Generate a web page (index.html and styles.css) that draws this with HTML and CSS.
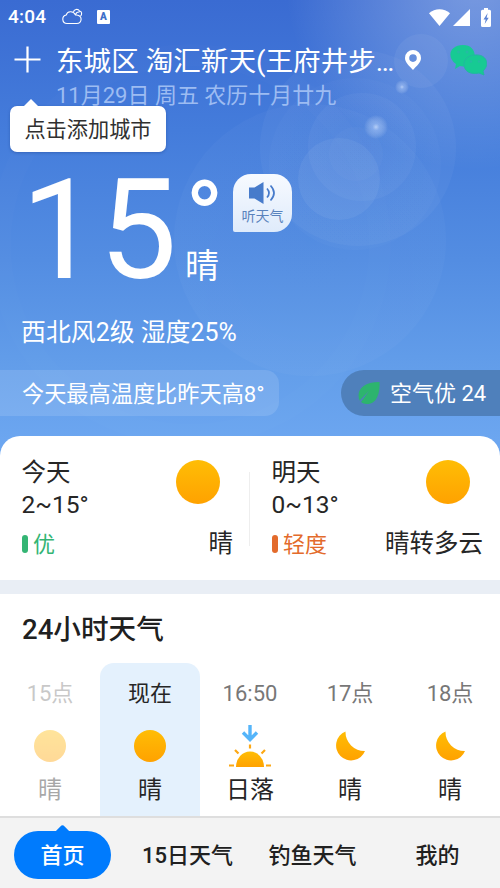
FILE: index.html
```html
<!DOCTYPE html>
<html lang="zh-CN">
<head>
<meta charset="utf-8">
<meta name="viewport" content="width=device-width, initial-scale=1">
<title>天气</title>
<link rel="stylesheet" href="styles.css">
</head>
<body>
<div class="app">
  <svg class="defs" width="0" height="0" aria-hidden="true">
    <defs>
      <linearGradient id="sunfill" x1="0" y1="0" x2="0" y2="1"><stop offset="0" stop-color="#ffbd05"/><stop offset="1" stop-color="#ffa200"/></linearGradient>
      <symbol id="sun" viewBox="0 0 44 44"><circle cx="22" cy="22" r="22" fill="url(#sunfill)"/></symbol>
      <symbol id="moon" viewBox="0 0 30 30"><path d="M10.500 .5A15 15 0 1 0 30 20A19 19 0 0 1 10.500 .5Z" fill="url(#sunfill)"/></symbol>
    </defs>
  </svg>
  <header class="sky">
    <svg class="flare" viewBox="0 0 500 460" aria-hidden="true">
      <defs>
        <radialGradient id="glow"><stop offset="0" stop-color="#fff" stop-opacity=".33"/><stop offset="1" stop-color="#fff" stop-opacity="0"/></radialGradient>
        <radialGradient id="spark"><stop offset="0" stop-color="#d5e5ff" stop-opacity=".75"/><stop offset=".3" stop-color="#c5dbff" stop-opacity=".4"/><stop offset="1" stop-color="#fff" stop-opacity="0"/></radialGradient>
        <radialGradient id="disc"><stop offset="0" stop-color="#fff" stop-opacity=".02"/><stop offset="1" stop-color="#fff" stop-opacity=".035"/></radialGradient>
      </defs>
      <circle cx="475" cy="-20" r="190" fill="url(#glow)"/>
      <circle cx="310" cy="240" r="136" fill="url(#disc)" opacity=".7"/>
      <circle cx="358" cy="148" r="98" fill="url(#disc)"/>
      <circle cx="355" cy="164" r="86" fill="url(#disc)" opacity=".5"/>
      <circle cx="362" cy="147" r="54" fill="url(#disc)"/>
      <circle cx="339" cy="179" r="41" fill="#fff" opacity=".055"/>
      <circle cx="356" cy="154" r="27" fill="#fff" opacity=".025"/>
      <circle cx="421" cy="61" r="27" fill="#fff" opacity=".05"/>
      <circle cx="190" cy="245" r="190" fill="none" stroke="#fff" stroke-width="22" opacity=".012"/>
      <circle cx="376" cy="127" r="12" fill="url(#spark)"/>
      <circle cx="402" cy="87" r="7" fill="url(#spark)"/>
    </svg>
    <div class="status">
      <span class="clock">4:04</span>
      <svg class="st-cloud" viewBox="0 0 22 18" fill="none" stroke="#fff" stroke-width="1.100"><path d="M5 15.500a4.300 4.300 0 0 1-.8-8.500C5.200 3.500 11 2 13.500 7c3-.2 5.800 1.300 5.600 4.300-.1 2.500-1.800 4.200-4.400 4.200Z"/><path d="M11.500 4c.3-2.800 4.500-3.600 6-1 2.700.4 2.600 3.600 1 5.200M13.500 6.800c.5-2 2.200-3 4-2.800"/></svg>
      <span class="st-a">A</span>
      <span class="grow"></span>
      <svg class="st-wifi" viewBox="0 0 21 17"><path d="M10.500 17 0 4.200C6-1.200 15-1.200 21 4.200Z" fill="#fff"/></svg>
      <svg class="st-signal" viewBox="0 0 18 17"><path d="M17 0v17H0Z" fill="#fff"/></svg>
      <svg class="st-battery" viewBox="0 0 10 19"><path d="M3 0h4v1.800h1.500Q10 1.800 10 3.300v14.200q0 1.500-1.500 1.500h-7Q0 19 0 17.500V3.300Q0 1.800 1.500 1.800H3Z" fill="#fff"/><path d="M6.700 5 2.500 11.400h2.200L3.700 16 7.700 9.700H5.600Z" fill="#5b82d4"/></svg>
    </div>
    <div class="place">
      <svg class="plus" viewBox="0 0 28 28"><path d="M14 .5v27M.5 14h27" stroke="#fff" stroke-width="2.300"/></svg>
      <div class="names">
        <div class="city"><span class="cityname">东城区 淘汇新天(王府井步…</span>
          <svg class="pin" viewBox="0 0 16 20"><path fill="#fff" fill-rule="evenodd" d="M8 0a8 8 0 0 1 8 8c0 4.700-4.500 8-8 12C4.500 16 0 12.700 0 8a8 8 0 0 1 8-8Zm0 4.300a3.800 3.800 0 1 0 0 7.600 3.800 3.800 0 0 0 0-7.600Z"/></svg>
        </div>
        <div class="date">11月29日 周五 农历十月廿九</div>
      </div>
      <svg class="wechat" viewBox="0 0 37 32"><g fill="#17ca93"><path d="M13 1C25 1 28 13 21 20c-2 2-7 3-11 2l-5 3 1-5C-4 13 0 1 13 1Z"/><path stroke="#22b8a0" stroke-width="1" d="M25 11c12-1 15 10 8 16l1 4-5-2C20 31 14 27 14 20c0-5 5-9 11-9Z"/></g><g fill="#25bba3"><circle cx="8.500" cy="8" r="1.500"/><circle cx="17" cy="8" r="1.500"/><circle cx="21" cy="17.500" r="1.200"/><circle cx="29" cy="17.500" r="1.200"/></g></svg>
      <div class="tip">点击添加城市</div>
    </div>
    <div class="now">
      <span class="temp">15</span>
      <div class="side"><span class="deg">°</span><span class="cond">晴</span></div>
      <div class="listen">
        <svg viewBox="0 0 28 22"><path d="M0 5.500h5.500L14.500 0v22L5.500 16.500H0Z" fill="#477bcb"/><path d="M18 6.500q4 4.500 0 9M21.500 3.500q7 7.500 0 15" fill="none" stroke="#477bcb" stroke-width="1.700"/></svg>
        <span>听天气</span>
      </div>
    </div>
    <div class="wind">西北风2级 湿度25%</div>
    <div class="chips">
      <span class="compare">今天最高温度比昨天高8°</span>
      <span class="air"><svg viewBox="0 0 22 22"><path d="M21.500 0C22 9 20 22 9 22c-3 0-4.500-1-6-2l8-11-9.500 9.500C-2 9 4 0 21.500 0Z" fill="#2db46e"/></svg><span>空气优 24</span></span>
    </div>
  </header>
  <section class="days">
    <div class="day">
      <div class="left"><span>今天</span><span>2~15°</span><span class="aqi good"><i></i>优</span></div>
      <div class="right"><svg><use href="#sun"/></svg><span>晴</span></div>
    </div>
    <div class="line"></div>
    <div class="day">
      <div class="left"><span>明天</span><span>0~13°</span><span class="aqi light"><i></i>轻度</span></div>
      <div class="right"><svg><use href="#sun"/></svg><span>晴转多云</span></div>
    </div>
  </section>
  <section class="hourly">
    <h2>24小时天气</h2>
    <div class="hours">
      <div class="hour past"><time>15点</time><svg class="hsun"><use href="#sun"/></svg><span>晴</span></div>
      <div class="hour active"><time>现在</time><svg class="hsun"><use href="#sun"/></svg><span>晴</span></div>
      <div class="hour"><time>16:50</time>
        <svg class="sunset" viewBox="0 0 42 44"><path d="M21 1v13M14 8.500l7 7 7-7" fill="none" stroke="#55b5fa" stroke-width="3.400"/><path d="M7 43a14 15.500 0 0 1 28 0Z" fill="url(#sunfill)"/><path d="M0 41.500h5M37 41.500h5M6 26l3.500 3.500M36 26l-3.500 3.500M21 20.500v4" stroke="#fca815" stroke-width="2.200"/></svg>
        <span>日落</span></div>
      <div class="hour"><time>17点</time><svg class="hmoon"><use href="#moon"/></svg><span>晴</span></div>
      <div class="hour"><time>18点</time><svg class="hmoon"><use href="#moon"/></svg><span>晴</span></div>
    </div>
  </section>
  <nav class="tabs">
    <a class="tab on">首页</a><a class="tab">15日天气</a><a class="tab">钓鱼天气</a><a class="tab">我的</a>
  </nav>
</div>
</body>
</html>
```
FILE: styles.css
```css
* { box-sizing: border-box; }
body { margin: 0; font-family: Roboto, "Noto Sans CJK SC", sans-serif; color: #262626; }
svg { display: block; flex: none; }
.defs { position: absolute; }
.app { width: 500px; height: 888px; overflow: hidden; display: flex; flex-direction: column; background: #fff; }
.grow { flex: 1; }

.sky { position: relative; flex: none; height: 460px; color: #fff; display: flex; flex-direction: column; background: linear-gradient(180deg, #3a6bd2 0, #447cdb 130px, #538de2 260px, #639eea 370px, #6ca6f0 440px); }
.flare { position: absolute; left: 0; top: 0; width: 500px; height: 460px; }
.status { position: relative; height: 34px; display: flex; align-items: center; padding: 0 9px 0 8px; }
.clock { font-size: 19px; font-weight: 500; line-height: 34px; width: 54px; letter-spacing: .2px; }
.st-cloud { width: 22px; height: 18px; }
.st-a { margin-left: 13px; width: 13px; height: 14px; background: #fff; border-radius: 1px; color: #3e70c9; font-size: 10px; font-weight: 900; line-height: 13px; text-align: center; }
.st-wifi { width: 21px; height: 17px; margin-right: 3px; }
.st-signal { width: 18px; height: 17px; margin-right: 10px; }
.st-battery { width: 10px; height: 19px; }

.place { position: relative; height: 126px; display: flex; align-items: flex-start; padding: 6px 13px 0 14px; }
.plus { width: 27px; height: 27px; margin-top: 6px; }
.names { margin-left: 15px; width: 381px; }
.city { display: flex; align-items: center; height: 40px; font-size: 27.600px; line-height: 38px; white-space: nowrap; }
.cityname { width: 341px; margin-top: 3px; }
.pin { width: 16px; height: 20px; margin-left: 8px; }
.date { margin-top: 2px; font-size: 22px; line-height: 28px; color: #9dbcf2; white-space: nowrap; }
.wechat { width: 37px; height: 32px; margin: 4px 0 0 13px; }
.tip { position: absolute; left: 10px; top: 72px; width: 156px; height: 46px; border-radius: 7px; background: #fff; color: #303030; font-size: 21.200px; line-height: 48px; text-align: center; box-shadow: 0 1px 3px rgba(20, 50, 120, .35); }
.tip::before { content: ""; position: absolute; left: 14px; top: -7px; border: 7px solid transparent; border-top: 0; border-bottom-color: #fff; }

.now { position: relative; height: 146px; display: flex; align-items: flex-start; padding-left: 21px; }
.temp { font-size: 139px; line-height: 142px; width: 157px; }
.side { width: 55px; height: 146px; display: flex; flex-direction: column; padding-left: 7px; }
.deg { font-size: 104px; line-height: 82px; height: 82px; margin-top: 19px; }
.cond { font-size: 34px; line-height: 40px; margin-top: -15px; }
.listen { width: 59px; height: 58px; margin-top: 14px; border-radius: 18px 18px 18px 2px; background: linear-gradient(#f7faff, #dfebfb); display: flex; flex-direction: column; align-items: center; padding-top: 8px; color: #5a83bd; font-size: 14px; line-height: 24px; }
.listen svg { width: 28px; height: 22px; }
.wind { position: relative; padding-left: 21px; height: 64px; font-size: 24.900px; line-height: 54px; }
.chips { position: relative; display: flex; justify-content: space-between; height: 46px; line-height: 48px; font-size: 22.200px; }
.compare { width: 279px; padding-left: 22px; border-radius: 0 14px 14px 0; background: rgba(255, 255, 255, .12); }
.air { width: 159px; padding-left: 17px; display: flex; align-items: center; border-radius: 23px 0 0 23px; background: #4f80bb; font-size: 22px; white-space: nowrap; }
.air svg { width: 22px; height: 22px; margin-right: 10px; }
.air span { padding-top: 2px; }

.days { position: relative; flex: none; height: 144px; margin-top: -24px; display: flex; background: #fff; border-radius: 20px 20px 0 0; font-size: 24.500px; }
.day { flex: 1; display: flex; justify-content: space-between; padding: 21px 17px 0 21.500px; }
.left { display: flex; flex-direction: column; line-height: 32px; }
.right { display: flex; flex-direction: column; align-items: flex-end; padding-top: 3px; line-height: 32px; }
.right svg { width: 44px; height: 44px; margin: 0 13px 24px 0; }
.aqi { display: flex; align-items: center; margin-top: 8px; font-size: 22px; }
.aqi i { width: 6px; height: 18px; margin: -2px 5.500px 0 0; border-radius: 3px; background: currentColor; }
.good { color: #34b574; }
.light { color: #e36b2c; }
.line { width: 1px; height: 74px; margin: 36px 0 0 -1px; background: #eee; }

.hourly { flex: 1; min-height: 0; border-top: 14px solid #e9eef5; background: #fff; }
.hourly h2 { margin: 0; padding: 14px 22px 0; height: 69px; font-size: 27.600px; line-height: 44px; font-weight: 500; color: #202020; }
.hours { display: flex; height: 155px; }
.hour { width: 100px; display: flex; flex-direction: column; align-items: center; padding-top: 15px; border-radius: 14px 14px 0 0; font-size: 24px; line-height: 32px; }
.hour time { font-size: 22px; color: #777; height: 32px; }
.hour span { margin-top: auto; margin-bottom: 12px; }
.active { background: #e4f1fd; }
.hour.active time { color: #262626; }
.past { opacity: .4; }
.hsun { width: 32px; height: 32px; margin-top: 20px; }
.hmoon { width: 30px; height: 30px; margin-top: 21px; }
.sunset { width: 42px; height: 44px; margin-top: 14px; }

.tabs { position: relative; flex: none; height: 72px; display: flex; align-items: flex-start; padding: 13px 0 0 14px; background: #f3f3f3; border-top: 2px solid #dedede; font-size: 22px; line-height: 50px; font-weight: 500; color: #202020; }
.tab { width: 125px; text-align: center; }
.on { position: relative; width: 97px; margin-right: 14px; height: 48px; border-radius: 24px; background: #007bfd; color: #fff; }
.on::before { content: ""; position: absolute; left: 42px; top: -4px; width: 13px; height: 13px; border-radius: 3px; background: #007bfd; transform: rotate(45deg); }
```
